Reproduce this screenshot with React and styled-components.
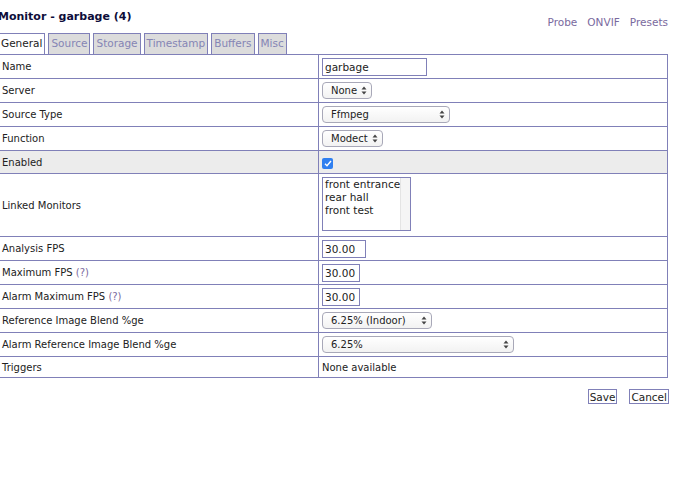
import React from 'react'
import styled, { createGlobalStyle } from 'styled-components'

const GlobalStyle = createGlobalStyle`
    body {
        margin: 0;
        background: #fff;
        font-family: "DejaVu Sans", Verdana, sans-serif;
        font-size: 10px;
        color: #222;
    }
`;

const Page = styled.div`
    width: 670px;
    margin-left: -2px;
`;

const Header = styled.div`
    display: flex;
    justify-content: space-between;
    align-items: flex-start;
    height: 33px;
`;

const Title = styled.h2`
    margin: 10px 0 0 0;
    font-size: 11px;
    font-weight: bold;
    color: #0d0d3a;
`;

const Links = styled.div`
    display: flex;
    gap: 10px;
    margin-top: 16px;
`;

const Link = styled.a`
    color: #7a6a9e;
    font-size: 10.5px;
    text-decoration: none;
`;

const Tabs = styled.ul`
    display: flex;
    gap: 3px;
    list-style: none;
    margin: 0 0 0 2px;
    padding: 0;
    height: 21px;
`;

const Tab = styled.li`
    box-sizing: border-box;
    height: 21px;
    padding: 3px 2px 0 2px;
    border: 1px solid #8080b8;
    border-bottom: none;
    background: ${p => (p.$active ? '#fff' : '#dcdcdc')};
    color: ${p => (p.$active ? '#222' : '#8585b5')};
    font-size: 10.5px;
    margin-left: ${p => (p.$active ? '-2px' : '0')};
`;

const Table = styled.table`
    width: 670px;
    table-layout: fixed;
    border-collapse: collapse;
    border: 1px solid #8080b8;
`;

const Row = styled.tr`
    background: ${p => (p.$shade ? '#ececec' : '#fff')};
`;

const Cell = styled.td`
    border: 1px solid #8080b8;
    padding: 0 3px;
    height: ${p => p.$h || 23}px;
    vertical-align: middle;
    font-size: 10px;
    white-space: nowrap;
`;

const Help = styled.span`
    color: #7a6a9e;
`;

const TextInput = styled.div`
    box-sizing: border-box;
    display: flex;
    align-items: center;
    width: ${p => p.$w}px;
    height: 18px;
    padding: 0 2px;
    border: 1px solid #8080b8;
    font-size: 10.5px;
    color: #222;
`;

const SelectBox = styled.div`
    box-sizing: border-box;
    display: flex;
    align-items: center;
    justify-content: space-between;
    width: ${p => p.$w}px;
    height: 17px;
    padding: 0 4px 0 8px;
    border: 1px solid #a8a8b8;
    border-radius: 4px;
    background: linear-gradient(#ffffff, #f2f2f2);
    font-size: 10px;
    color: #222;
`;

const Check = styled.span`
    display: inline-flex;
    align-items: center;
    justify-content: center;
    width: 11px;
    height: 11px;
    border-radius: 2px;
    background: #2f7ff0;
    margin-top: 3px;
`;

const ListBox = styled.div`
    box-sizing: border-box;
    display: flex;
    width: 89px;
    height: 54px;
    border: 1px solid #8080b8;
    font-size: 10.5px;
    line-height: 13px;
    margin-top: -2px;
`;

const ListItems = styled.div`
    flex: 1;
    padding: 0 0 0 2px;
`;

const ScrollTrack = styled.div`
    width: 10px;
    border-left: 1px solid #e4e4e4;
    background: #f5f5f5;
`;

const Buttons = styled.div`
    display: flex;
    justify-content: flex-end;
    gap: 12px;
    margin-top: 11px;
    margin-right: -1px;
`;

const Button = styled.button`
    box-sizing: border-box;
    height: 15px;
    padding: 0 1px;
    border: 1px solid #8080b8;
    background: #fff;
    font-family: "DejaVu Sans", Verdana, sans-serif;
    font-size: 10.5px;
    line-height: 12px;
    color: #222;
`;

function Arrows() {
    return (
        <svg width="6" height="9" viewBox="0 0 6 9">
            <path d="M3 0.5 L5.5 3.5 H0.5 Z" fill="#444" />
            <path d="M3 8.5 L5.5 5.5 H0.5 Z" fill="#444" />
        </svg>
    )
}

function Select({ w, value }) {
    return (
        <SelectBox $w={w}>
            <span>{value}</span>
            <Arrows />
        </SelectBox>
    )
}

const tabs = ['General', 'Source', 'Storage', 'Timestamp', 'Buffers', 'Misc']

export default function App() {
    return (
        <Page>
            <GlobalStyle />
            <Header>
                <Title>Monitor - garbage (4)</Title>
                <Links>
                    <Link>Probe</Link>
                    <Link>ONVIF</Link>
                    <Link>Presets</Link>
                </Links>
            </Header>
            <Tabs>
                {tabs.map((t, i) => (
                    <Tab key={t} $active={i === 0}>{t}</Tab>
                ))}
            </Tabs>
            <Table>
                <colgroup>
                    <col style={{ width: 320 }} />
                    <col />
                </colgroup>
                <tbody>
                    <Row>
                        <Cell>Name</Cell>
                        <Cell><TextInput $w={105}>garbage</TextInput></Cell>
                    </Row>
                    <Row>
                        <Cell>Server</Cell>
                        <Cell><Select w={50} value="None" /></Cell>
                    </Row>
                    <Row>
                        <Cell>Source Type</Cell>
                        <Cell><Select w={128} value="Ffmpeg" /></Cell>
                    </Row>
                    <Row>
                        <Cell>Function</Cell>
                        <Cell><Select w={61} value="Modect" /></Cell>
                    </Row>
                    <Row $shade>
                        <Cell $h={22}>Enabled</Cell>
                        <Cell $h={22}>
                            <Check>
                                <svg width="8" height="7" viewBox="0 0 8 7">
                                    <path d="M1 3.8 L3 5.8 L7 1" stroke="#fff" strokeWidth="1.4" fill="none" />
                                </svg>
                            </Check>
                        </Cell>
                    </Row>
                    <Row>
                        <Cell $h={62}>Linked Monitors</Cell>
                        <Cell $h={62}>
                            <ListBox>
                                <ListItems>
                                    <div>front entrance</div>
                                    <div>rear hall</div>
                                    <div>front test</div>
                                </ListItems>
                                <ScrollTrack />
                            </ListBox>
                        </Cell>
                    </Row>
                    <Row>
                        <Cell>Analysis FPS</Cell>
                        <Cell><TextInput $w={44}>30.00</TextInput></Cell>
                    </Row>
                    <Row>
                        <Cell>Maximum FPS <Help>(?)</Help></Cell>
                        <Cell><TextInput $w={38}>30.00</TextInput></Cell>
                    </Row>
                    <Row>
                        <Cell>Alarm Maximum FPS <Help>(?)</Help></Cell>
                        <Cell><TextInput $w={38}>30.00</TextInput></Cell>
                    </Row>
                    <Row>
                        <Cell>Reference Image Blend %ge</Cell>
                        <Cell><Select w={110} value="6.25% (Indoor)" /></Cell>
                    </Row>
                    <Row>
                        <Cell>Alarm Reference Image Blend %ge</Cell>
                        <Cell><Select w={192} value="6.25%" /></Cell>
                    </Row>
                    <Row>
                        <Cell $h={20}>Triggers</Cell>
                        <Cell $h={20}>None available</Cell>
                    </Row>
                </tbody>
            </Table>
            <Buttons>
                <Button>Save</Button>
                <Button>Cancel</Button>
            </Buttons>
        </Page>
    )
}
